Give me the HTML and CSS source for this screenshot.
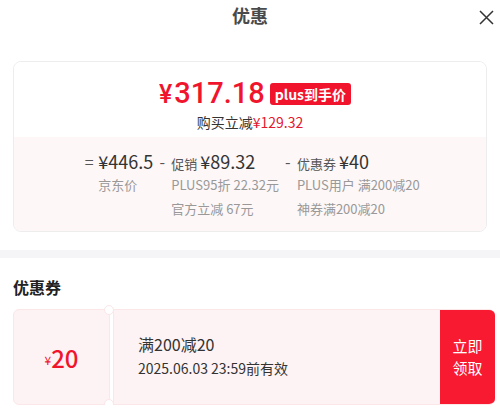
FILE: index.html
```html
<!DOCTYPE html>
<html lang="zh-CN">
<head>
    <meta charset="UTF-8">
    <meta name="viewport" content="width=device-width, initial-scale=1.0">
    <title>优惠</title>
    <link rel="stylesheet" href="styles.css">
</head>
<body>
    <div class="header">
        <span></span>
        <h1 class="title">优惠</h1>
        <button class="close" aria-label="关闭">
            <svg width="15" height="15" viewBox="0 0 15 15"><path d="M1 1 L14 14 M14 1 L1 14" stroke="#333" stroke-width="1.5" fill="none"/></svg>
        </button>
    </div>

    <div class="price-card">
        <div class="price-top">
            <div class="price-line">
                <span class="price"><span class="yen">¥</span>317.18</span>
                <span class="badge">plus到手价</span>
            </div>
            <p class="save">购买立减<span class="red">¥129.32</span></p>
        </div>
        <div class="price-bottom">
            <span class="op">=</span>
            <div class="col">
                <div class="main"><span class="amt">¥446.5</span></div>
                <div class="sub">京东价</div>
            </div>
            <span class="op">-</span>
            <div class="col">
                <div class="main"><span class="lbl">促销</span><span class="amt">¥89.32</span></div>
                <div class="sub">PLUS95折 22.32元</div>
                <div class="sub">官方立减 67元</div>
            </div>
            <span class="op">-</span>
            <div class="col">
                <div class="main"><span class="lbl">优惠券</span><span class="amt">¥40</span></div>
                <div class="sub">PLUS用户 满200减20</div>
                <div class="sub">神券满200减20</div>
            </div>
        </div>
    </div>

    <div class="band"></div>

    <h2 class="section-title">优惠券</h2>
    <div class="coupon">
        <div class="coupon-left">
            <span class="c-yen">¥</span><span class="c-amt">20</span>
        </div>
        <div class="coupon-main">
            <div class="coupon-info">
                <div class="c-rule">满200减20</div>
                <div class="c-date">2025.06.03 23:59前有效</div>
            </div>
            <button class="c-btn">立即<br>领取</button>
        </div>
    </div>
</body>
</html>
```

FILE: styles.css
```css
body {
    margin: 0;
    background-color: #ffffff;
    color: #333333;
    font-family: "Noto Sans CJK SC", "Noto Sans", sans-serif;
}
.header {
    display: grid;
    grid-template-columns: 1fr auto 1fr;
    align-items: center;
    height: 30px;
}
.title {
    margin: 0;
    font-size: 18px;
    font-weight: bold;
    color: #4a4a4a;
    line-height: 30px;
}
.close {
    justify-self: end;
    margin-right: 6px;
    margin-top: 4px;
    padding: 0;
    border: none;
    background: none;
    width: 15px;
    height: 15px;
}
.price-card {
    margin: 31px 13px 0;
    border: 1px solid #ededed;
    border-radius: 8px;
    overflow: hidden;
    height: 169px;
}
.price-top {
    background-color: #ffffff;
    padding-top: 15px;
    height: 60px;
    text-align: center;
}
.price-line {
    display: flex;
    justify-content: center;
    align-items: center;
    height: 34px;
    padding-left: 10px;
}
.price {
    font-family: Roboto, "Noto Sans CJK SC", sans-serif;
    font-size: 29px;
    font-weight: 500;
    color: #f0142d;
    line-height: 34px;
}
.yen {
    font-size: 25px;
    margin-right: 2px;
}
.badge {
    margin-left: 5px;
    background-color: #f0142d;
    color: #ffffff;
    font-size: 14px;
    font-weight: bold;
    line-height: 22px;
    padding: 0 5px;
    border-radius: 3px;
}
.save {
    margin: 1px 0 0;
    font-size: 14px;
    line-height: 20px;
    color: #333333;
}
.red {
    color: #e3172d;
}
.price-bottom {
    background-color: #fdf7f7;
    height: 95px;
    padding-top: 12px;
    display: flex;
    justify-content: center;
    align-items: flex-start;
}
.op {
    width: 18px;
    text-align: center;
    font-size: 16px;
    line-height: 24px;
    color: #555555;
}
.col {
    display: flex;
    flex-direction: column;
}
.main {
    line-height: 24px;
    height: 24px;
    white-space: nowrap;
}
.amt {
    font-size: 18px;
    color: #333333;
}
.lbl {
    font-size: 13px;
    color: #555555;
    margin-right: 3px;
}
.sub {
    font-size: 13px;
    line-height: 24px;
    color: #999999;
    white-space: nowrap;
}
.band {
    margin-top: 18px;
    height: 8px;
    background-color: #f5f5f8;
}
.section-title {
    margin: 0;
    padding: 20px 13px 0;
    font-size: 16px;
    font-weight: bold;
    line-height: 18px;
    color: #222222;
}
.coupon {
    display: flex;
    margin: 13px 5px 0 13px;
    height: 96px;
}
.coupon-left {
    position: relative;
    width: 95px;
    background-color: #fdf3f4;
    border: 1px solid #fbe6e8;
    border-radius: 6px 0 0 6px;
    display: flex;
    justify-content: center;
    align-items: center;
    color: #f0142d;
}
.coupon-left::before,
.coupon-left::after {
    content: "";
    position: absolute;
    right: -5px;
    width: 8px;
    height: 8px;
    border-radius: 50%;
    background-color: #ffffff;
    border: 1px solid #fbe6e8;
}
.coupon-left::before {
    top: -5px;
}
.coupon-left::after {
    bottom: -5px;
}
.c-yen {
    font-size: 12px;
    margin-top: 4px;
}
.c-amt {
    font-size: 24px;
    font-weight: 500;
}
.coupon-main {
    flex: 1;
    margin-left: 3px;
    display: flex;
    background-color: #fdf3f4;
    border: 1px solid #fbe6e8;
    border-right: none;
    border-radius: 0 6px 6px 0;
    overflow: hidden;
}
.coupon-info {
    flex: 1;
    padding: 22px 0 0 24px;
}
.c-rule {
    font-size: 16px;
    line-height: 24px;
    color: #333333;
}
.c-date {
    font-size: 14px;
    line-height: 24px;
    color: #333333;
}
.c-btn {
    width: 55px;
    border: none;
    margin: -1px 0;
    background-color: #f71a30;
    color: #ffffff;
    font-family: "Noto Sans CJK SC", sans-serif;
    font-size: 15px;
    line-height: 22px;
    padding: 0;
}
```
